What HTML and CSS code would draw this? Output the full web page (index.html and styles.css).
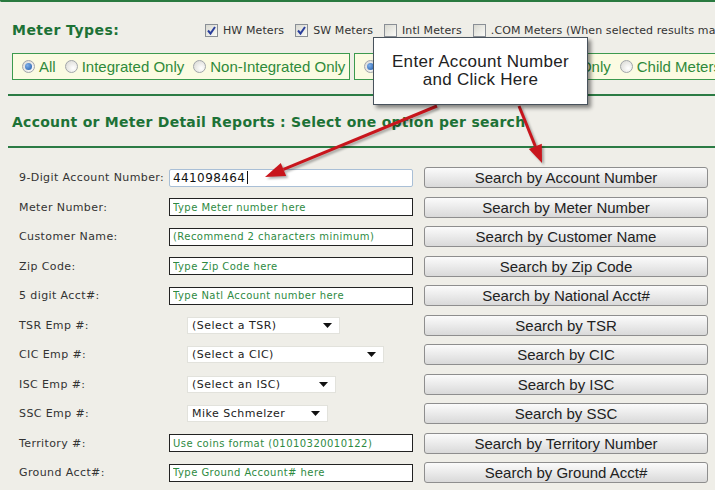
FILE: index.html
```html
<!DOCTYPE html>
<html>
<head>
<meta charset="utf-8">
<title>Meter Search</title>
<link rel="stylesheet" href="styles.css">
</head>
<body>
<div class="page">
  <div class="prev-edge"></div>

  <div class="types-row">
    <span class="types-title">Meter Types:</span>
    <label class="cb"><span class="box"><svg viewBox="0 0 11 11" width="11" height="11"><polyline points="2,5.5 4.5,8.5 9,2" fill="none" stroke="#2b3f9c" stroke-width="2"/></svg></span>HW Meters</label>
    <label class="cb"><span class="box"><svg viewBox="0 0 11 11" width="11" height="11"><polyline points="2,5.5 4.5,8.5 9,2" fill="none" stroke="#2b3f9c" stroke-width="2"/></svg></span>SW Meters</label>
    <label class="cb"><span class="box"></span>Intl Meters</label>
    <label class="cb"><span class="box"></span>.COM Meters (When selected results may take longer)</label>
  </div>

  <div class="radio-row">
    <div class="radio-group">
      <label class="rb"><span class="dot on"></span>All</label>
      <label class="rb"><span class="dot"></span>Integrated Only</label>
      <label class="rb"><span class="dot"></span>Non-Integrated Only</label>
    </div>
    <div class="radio-group">
      <label class="rb"><span class="dot on"></span>All</label>
      <label class="rb"><span class="dot"></span>Parent Account Meters Only</label>
      <label class="rb"><span class="dot"></span>Child Meters Only</label>
    </div>
  </div>

  <div class="rule"></div>
  <h2 class="section-title">Account or Meter Detail Reports : Select one option per search</h2>
  <div class="rule"></div>

  <div class="search-grid">
    <label class="lbl">9-Digit Account Number:</label>
    <div class="field"><input class="txt active" type="text" value="441098464"><span class="caret"></span></div>
    <button class="btn">Search by Account Number</button>

    <label class="lbl">Meter Number:</label>
    <div class="field"><input class="txt" type="text" placeholder="Type Meter number here"></div>
    <button class="btn">Search by Meter Number</button>

    <label class="lbl">Customer Name:</label>
    <div class="field"><input class="txt" type="text" placeholder="(Recommend 2 characters minimum)"></div>
    <button class="btn">Search by Customer Name</button>

    <label class="lbl">Zip Code:</label>
    <div class="field"><input class="txt" type="text" placeholder="Type Zip Code here"></div>
    <button class="btn">Search by Zip Code</button>

    <label class="lbl">5 digit Acct#:</label>
    <div class="field"><input class="txt" type="text" placeholder="Type Natl Account number here"></div>
    <button class="btn">Search by National Acct#</button>

    <label class="lbl">TSR Emp #:</label>
    <div class="field"><div class="select w-tsr"><span>(Select a TSR)</span><svg width="9" height="5" viewBox="0 0 9 5"><polygon points="0,0 9,0 4.5,5" fill="#111"/></svg></div></div>
    <button class="btn">Search by TSR</button>

    <label class="lbl">CIC Emp #:</label>
    <div class="field"><div class="select w-cic"><span>(Select a CIC)</span><svg width="9" height="5" viewBox="0 0 9 5"><polygon points="0,0 9,0 4.5,5" fill="#111"/></svg></div></div>
    <button class="btn">Search by CIC</button>

    <label class="lbl">ISC Emp #:</label>
    <div class="field"><div class="select w-isc"><span>(Select an ISC)</span><svg width="9" height="5" viewBox="0 0 9 5"><polygon points="0,0 9,0 4.5,5" fill="#111"/></svg></div></div>
    <button class="btn">Search by ISC</button>

    <label class="lbl">SSC Emp #:</label>
    <div class="field"><div class="select w-ssc"><span>Mike Schmelzer</span><svg width="9" height="5" viewBox="0 0 9 5"><polygon points="0,0 9,0 4.5,5" fill="#111"/></svg></div></div>
    <button class="btn">Search by SSC</button>

    <label class="lbl">Territory #:</label>
    <div class="field"><input class="txt" type="text" placeholder="Use coins format (01010320010122)"></div>
    <button class="btn">Search by Territory Number</button>

    <label class="lbl">Ground Acct#:</label>
    <div class="field"><input class="txt" type="text" placeholder="Type Ground Account# here"></div>
    <button class="btn">Search by Ground Acct#</button>
  </div>

  <svg class="arrows" width="715" height="490" viewBox="0 0 715 490">
    <line x1="437" y1="106" x2="283.5" y2="169.4" stroke="#c8161d" stroke-width="3"/>
    <polygon points="265,177 280.8,162.9 286.2,175.9" fill="#c8161d"/>
    <line x1="519" y1="106" x2="535.3" y2="146.3" stroke="#c8161d" stroke-width="3"/>
    <polygon points="542,163 528.8,148.9 541.8,143.7" fill="#c8161d"/>
  </svg>

  <div class="callout">Enter Account Number<br>and Click Here</div>
</div>
</body>
</html>
```

FILE: styles.css
```css
html, body {
  margin: 0;
  padding: 0;
}

body {
  background: #efeee8;
  font-family: "DejaVu Sans", Verdana, sans-serif;
  width: 715px;
  height: 490px;
  overflow: hidden;
}

.page {
  position: relative;
  height: 490px;
}

.prev-edge {
  height: 0;
  border-left: 2px solid #2a7a40;
  border-bottom: 2px solid #2a7a40;
  border-bottom-left-radius: 3px;
}

/* meter types row */
.types-row {
  margin-top: 16px;
  height: 24px;
  display: flex;
  align-items: center;
  padding-left: 12px;
  white-space: nowrap;
}

.types-title {
  width: 193px;
  flex-shrink: 0;
  font-weight: bold;
  font-size: 14px;
  letter-spacing: 0.45px;
  color: #1d7236;
}

.cb {
  display: flex;
  align-items: center;
  gap: 5px;
  font-size: 11px;
  letter-spacing: 0.1px;
  color: #333;
  margin-right: 11px;
  flex-shrink: 0;
}

.box {
  width: 13px;
  height: 13px;
  box-sizing: border-box;
  border: 1px solid #8a8f96;
  background: linear-gradient(135deg, #d8d8d0, #fbfbf8);
  display: flex;
  align-items: center;
  justify-content: center;
}

/* radio row */
.radio-row {
  margin-top: 11px;
  height: 27px;
  display: flex;
  gap: 4px;
  padding-left: 12px;
  white-space: nowrap;
}

.radio-group {
  flex-shrink: 0;
  box-sizing: border-box;
  height: 27px;
  border: 1px solid #3c9a4e;
  background: #fbfbe2;
  display: flex;
  align-items: center;
  gap: 9px;
  padding: 0 4px 0 9px;
}

.rb {
  display: flex;
  align-items: center;
  gap: 4px;
  font-family: "Liberation Sans", Arial, sans-serif;
  font-size: 15px;
  color: #2f8a3b;
}

.dot {
  width: 13px;
  height: 13px;
  box-sizing: border-box;
  border-radius: 50%;
  border: 1px solid #a2a6aa;
  background: radial-gradient(circle at 65% 65%, #ffffff, #d6d6d0);
  position: relative;
}

.dot.on::after {
  content: "";
  position: absolute;
  left: 2px;
  top: 2px;
  width: 7px;
  height: 7px;
  border-radius: 50%;
  background: radial-gradient(circle at 35% 35%, #7fb0ea, #1f5aa8);
}

/* rules and heading */
.rule {
  height: 2px;
  margin-left: 8px;
  background: #2b7b44;
}

.radio-row + .rule {
  margin-top: 14px;
}

.section-title {
  margin: 0;
  height: 50px;
  display: flex;
  align-items: center;
  padding: 2px 0 0 12px;
  box-sizing: border-box;
  font-size: 14px;
  letter-spacing: 0.26px;
  font-weight: bold;
  color: #1d7236;
  white-space: nowrap;
}

/* search grid */
.search-grid {
  margin-top: 14.75px;
  padding-left: 19px;
  display: grid;
  grid-template-columns: 150px 255px 284px;
  grid-auto-rows: 29.5px;
  align-items: center;
}

.lbl {
  font-size: 11px;
  letter-spacing: 0.4px;
  color: #333;
  white-space: nowrap;
}

.field {
  display: flex;
  align-items: center;
  position: relative;
}

.txt {
  width: 244px;
  height: 18px;
  box-sizing: border-box;
  border: 1px solid #222;
  background: #fff;
  padding: 0 3px;
  margin: 0;
  font-family: "DejaVu Sans", Verdana, sans-serif;
  font-size: 10px;
  letter-spacing: 0.45px;
  color: #2e8a3f;
  outline: none;
}

.txt::placeholder {
  color: #2e8a3f;
  opacity: 1;
}

.txt.active {
  border: 1px solid #a9bfd6;
  border-radius: 2px;
  font-size: 12px;
  letter-spacing: 0.4px;
  color: #111;
}

.caret {
  position: absolute;
  left: 78px;
  top: 2px;
  width: 1px;
  height: 13px;
  background: #111;
}

.select {
  margin-left: 18px;
  height: 17px;
  box-sizing: border-box;
  background: #fff;
  border: 1px solid #e2e2dc;
  display: flex;
  align-items: center;
  justify-content: space-between;
  padding: 0 7px 0 4px;
  font-size: 11px;
  letter-spacing: 0.5px;
  color: #222;
  white-space: nowrap;
}

.w-tsr { width: 153px; }
.w-cic { width: 197px; }
.w-isc { width: 149px; }
.w-ssc { width: 141px; }

.btn {
  width: 284px;
  height: 21px;
  box-sizing: border-box;
  border: 1px solid #8e8e8e;
  border-radius: 3px;
  background: linear-gradient(#fbfbfb, #ececec 45%, #d9d9d9);
  font-family: "Liberation Sans", Arial, sans-serif;
  font-size: 15px;
  color: #222;
  padding: 0;
  line-height: 19px;
  margin: 0;
}

/* overlay annotation */
.arrows {
  position: absolute;
  left: 0;
  top: 0;
  pointer-events: none;
  filter: drop-shadow(2px 2px 1px rgba(0, 0, 0, 0.3));
  z-index: 1;
}

.callout {
  position: absolute;
  left: 373px;
  top: 37px;
  width: 215px;
  height: 68px;
  box-sizing: border-box;
  border: 1px solid #48525c;
  background: #fff;
  box-shadow: 3px 3px 4px rgba(0, 0, 0, 0.45);
  padding-top: 15px;
  font-family: "Liberation Sans", Arial, sans-serif;
  font-size: 17px;
  letter-spacing: 0.3px;
  line-height: 18px;
  text-align: center;
  color: #222;
  z-index: 2;
}
```
